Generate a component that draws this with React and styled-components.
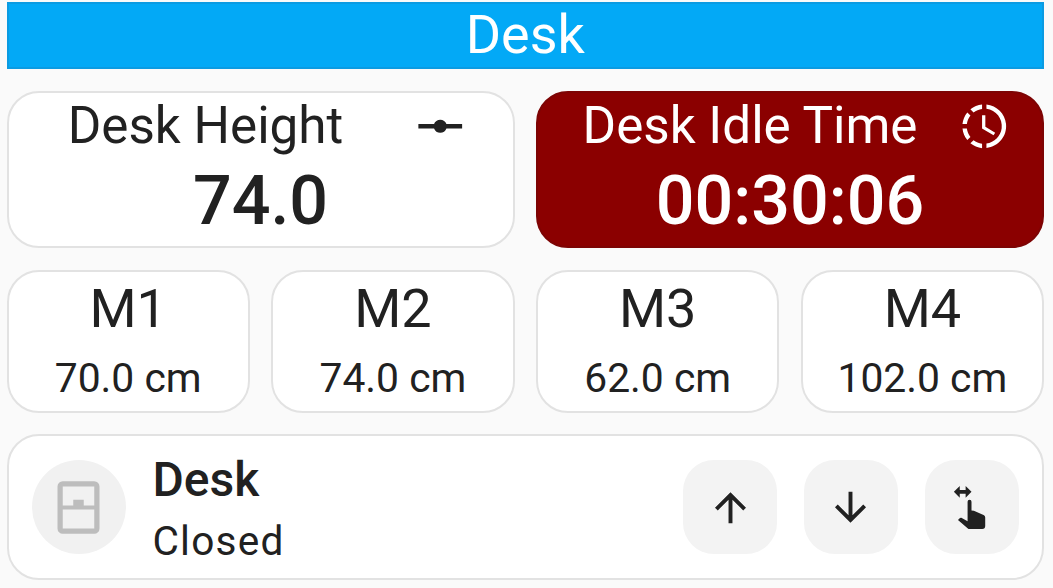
import React from "react";
import styled, { createGlobalStyle } from "styled-components";

const GlobalStyle = createGlobalStyle`
  * { box-sizing: border-box; }
  html, body { margin: 0; background: #fafafa; overflow: hidden; }
  body { font-family: Roboto, "Liberation Sans", sans-serif; color: #212121; }
`;

const Dashboard = styled.main`
  display: flex;
  flex-direction: column;
  gap: 21.5px;
  width: 1053px;
  height: 588px;
  padding: 1.5px 9px 0 6.5px;
`;

const Header = styled.header`
  display: flex;
  align-items: center;
  justify-content: center;
  height: 67.5px;
  margin-bottom: 0.5px;
  flex: none;
  border: 2px solid #0b9be2;
  background: #03a9f6;
  color: #fff;
  font-size: 53.9px;
  line-height: 64px;
`;

const Row = styled.section`
  display: grid;
  grid-template-columns: repeat(${(p) => p.$columns}, 1fr);
  gap: 21.5px;
  flex: none;
  height: ${(p) => p.$height}px;
`;

const Card = styled.article`
  min-width: 0;
  overflow: hidden;
  border: 2px solid ${(p) => (p.$alert ? "#7d0404" : "#e2e2e2")};
  border-radius: 32px;
  background: ${(p) => (p.$alert ? "#8b0000" : "#fff")};
  color: ${(p) => (p.$alert ? "#fff" : "#212121")};
`;

const TitleLine = styled.div`
  display: grid;
  grid-template-columns: ${(p) => p.$name}px ${(p) => p.$icon}px;
  align-items: center;
  justify-items: center;
  height: 67px;
  margin-bottom: 1px;
`;

const Name = styled.span`
  font-size: ${(p) => p.$size}px;
  line-height: 62px;
  white-space: nowrap;
`;

const Title = styled(Name)`
  padding-bottom: 1px;
`;

const Reading = styled.div`
  font-size: 68.2px;
  font-weight: 500;
  line-height: 80px;
  text-align: center;
`;

const Preset = styled(Card)`
  display: flex;
  flex-direction: column;
  align-items: center;
  padding-top: 6px;
`;

const PresetHeight = styled.span`
  margin-top: 14px;
  font-size: 40.8px;
  line-height: 48px;
  white-space: nowrap;
`;

const CoverCard = styled(Card)`
  display: flex;
  align-items: center;
  padding: 0 23.5px 0 23px;
`;

const StateBadge = styled.div`
  display: grid;
  place-items: center;
  width: 94px;
  height: 94px;
  border-radius: 50%;
  background: #f1f1f1;
  color: #bdbdbd;
`;

const CoverInfo = styled.div`
  flex: 1;
  display: flex;
  flex-direction: column;
  margin-left: 27px;
  padding-top: 6px;
`;

const CoverName = styled.span`
  font-size: 48px;
  font-weight: 500;
  line-height: 62px;
`;

const CoverState = styled.span`
  font-size: 40.6px;
  line-height: 60px;
  letter-spacing: 1.2px;
`;

const Controls = styled.div`
  display: flex;
  gap: 26.6px;
`;

const ControlButton = styled.button`
  display: grid;
  place-items: center;
  width: 94px;
  height: 94px;
  padding: 0;
  border: 0;
  border-radius: 31px;
  background: #f3f3f3;
  color: #212121;
`;

const Glyph = styled.svg`
  display: block;
  width: ${(p) => p.$size}px;
  height: ${(p) => p.$size}px;
  fill: currentColor;
`;

const icons = {
  vertex:
    "M2,11H9.17C9.58,9.83 10.69,9 12,9C13.31,9 14.42,9.83 14.83,11H22V13H14.83C14.42,14.17 13.31,15 12,15C10.69,15 9.58,14.17 9.17,13H2V11Z",
  clock:
    "M13,2.03V2.05L13,4.05C17.39,4.59 20.5,8.58 19.96,12.97C19.5,16.61 16.64,19.5 13,19.93V21.93C18.5,21.38 22.5,16.5 21.95,11C21.5,6.25 17.73,2.5 13,2.03M11,2.06C9.05,2.25 7.19,3 5.67,4.26L7.1,5.74C8.22,4.84 9.57,4.26 11,4.06V2.06M4.26,5.67C3,7.19 2.25,9.04 2.05,11H4.05C4.24,9.58 4.8,8.23 5.69,7.1L4.26,5.67M2.06,13C2.26,14.96 3.03,16.81 4.27,18.33L5.69,16.9C4.81,15.77 4.24,14.42 4.06,13H2.06M7.1,18.37L5.67,19.74C7.18,21 9.04,21.79 11,22V20C9.58,19.82 8.23,19.25 7.1,18.37M12.5,7V12.25L17,14.92L16.25,16.15L11,13V7H12.5Z",
  windowClosed:
    "M6,11.2H10V9H14V11.2H18V4H6V11.2M18,12.8H6V20H18V12.8M6,22A2,2 0 0,1 4,20V4A2,2 0 0,1 6,2H18A2,2 0 0,1 20,4V20A2,2 0 0,1 18,22H6Z",
  up: "M13,20H11V8L5.5,13.5L4.08,12.08L12,4.16L19.92,12.08L18.5,13.5L13,8V20Z",
  down: "M11,4H13V16L18.5,10.5L19.92,11.92L12,19.84L4.08,11.92L5.5,10.5L11,16V4Z",
  swipe:
    "M6,1L3,4L6,7V5H9V7L12,4L9,1V3H6V1M11,8A1,1 0 0,0 10,9V19L6.8,17.28H6.58C6.3,17.28 6.03,17.39 5.84,17.6L5.1,18.37L10,22.57C10.26,22.85 10.62,23 11,23H17.5A1.5,1.5 0 0,0 19,21.5V17.14C19,16.56 18.68,16.03 18.15,15.79L13.21,13.6L12,13.47V9A1,1 0 0,0 11,8Z",
};

const Icon = ({ name, size }) => (
  <Glyph viewBox="0 0 24 24" $size={size} aria-hidden="true">
    <path d={icons[name]} />
  </Glyph>
);

const presets = [
  ["M1", "70.0 cm"],
  ["M2", "74.0 cm"],
  ["M3", "62.0 cm"],
  ["M4", "102.0 cm"],
];

const controls = [
  ["up", "Raise"],
  ["down", "Lower"],
  ["swipe", "Adjust"],
];

export default function App() {
  return (
    <>
      <GlobalStyle />
      <Dashboard>
        <Header>Desk</Header>
        <Row $columns={2} $height={157}>
          <Card>
            <TitleLine $name={394} $icon={75}>
              <Title $size={51.2}>Desk Height</Title>
              <Icon name="vertex" size={52.5} />
            </TitleLine>
            <Reading>74.0</Reading>
          </Card>
          <Card $alert>
            <TitleLine $name={424} $icon={43.5}>
              <Title $size={51.2}>Desk Idle Time</Title>
              <Icon name="clock" size={52.5} />
            </TitleLine>
            <Reading>00:30:06</Reading>
          </Card>
        </Row>
        <Row $columns={4} $height={143}>
          {presets.map(([name, height]) => (
            <Preset key={name}>
              <Name $size={54}>{name}</Name>
              <PresetHeight>{height}</PresetHeight>
            </Preset>
          ))}
        </Row>
        <Row $columns={1} $height={146}>
          <CoverCard>
            <StateBadge>
              <Icon name="windowClosed" size={63} />
            </StateBadge>
            <CoverInfo>
              <CoverName>Desk</CoverName>
              <CoverState>Closed</CoverState>
            </CoverInfo>
            <Controls>
              {controls.map(([icon, label]) => (
                <ControlButton key={icon} aria-label={label}>
                  <Icon name={icon} size={47} />
                </ControlButton>
              ))}
            </Controls>
          </CoverCard>
        </Row>
      </Dashboard>
    </>
  );
}
